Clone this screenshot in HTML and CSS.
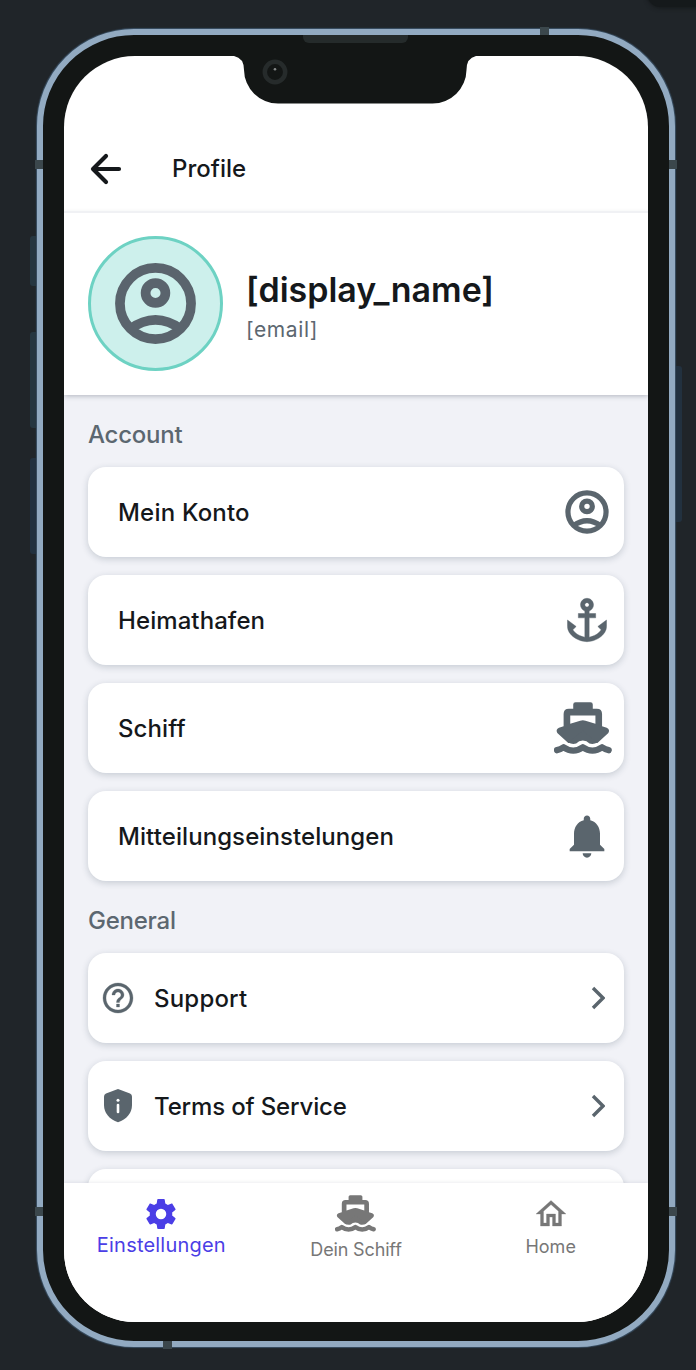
FILE: index.html
```html
<!DOCTYPE html>
<html lang="de">
<head>
<meta charset="utf-8">
<title>Profile</title>
<link rel="stylesheet" href="styles.css">
</head>
<body>
<svg class="defs" width="0" height="0" aria-hidden="true">
  <symbol id="account" viewBox="0 0 24 24">
    <g fill="none" stroke="currentColor" stroke-width="2.4"><circle cx="12" cy="12" r="8.8"/><circle cx="12" cy="9.400" r="2.450"/><path d="M5.600 18.400Q12 13.700 18.400 18.400"/></g>
  </symbol>
  <symbol id="ferry" viewBox="101 64 175 156">
    <path fill="currentColor" fill-rule="evenodd" d="M159 84V71q0-7 7-7h45q7 0 7 7v13h12q16 0 16 16v37l14 4q11 5 5 16L232 187q-14 2-26-6q-10-6-18-6t-18 6q-12 8-26 6L111 157q-6-11 5-16l14-4v-37q0-16 16-16zM150 104v25l30-9q8-3 16 0l30 9v-25z"/>
    <path fill="currentColor" d="M144 186q12 7 24 3q8-9 20-9t20 9q12 4 24-3L188 150z"/>
    <path fill="none" stroke="currentColor" stroke-width="19" stroke-linecap="round" stroke-linejoin="round" d="M110 209q10-2 20-9q14 10 29 10t29-10q14 10 29 10t29-10q10 7 20 9"/>
  </symbol>
</svg>
<div class="corner"></div>
<div class="phone">
  <i class="key key-mute"></i><i class="key key-up"></i><i class="key key-down"></i><i class="key key-power"></i>
  <i class="band band-top"></i><i class="band band-bottom"></i><i class="band band-lt"></i><i class="band band-rt"></i><i class="band band-lb"></i><i class="band band-rb"></i>
  <i class="speaker"></i>
  <div class="screen">
    <header class="bar">
      <svg class="back" viewBox="0 0 32 32"><path d="M16 3L3 16l13 13M3.500 16H29" fill="none" stroke="#15181b" stroke-width="4.2" stroke-linecap="round" stroke-linejoin="round"/></svg>
      <h1 class="title">Profile</h1>
    </header>
    <section class="profile">
      <div class="avatar"><svg width="97" height="97"><use href="#account"/></svg></div>
      <div class="who"><div class="name">[display_name]</div><div class="email">[email]</div></div>
    </section>
    <main class="list">
      <h2 class="label l-account">Account</h2>
      <div class="cards">
        <div class="card"><span class="t-konto">Mein Konto</span><svg width="52" height="52"><use href="#account"/></svg></div>
        <div class="card"><span class="t-hafen">Heimathafen</span><svg width="52" height="52" viewBox="0 0 24 24"><path fill="currentColor" stroke="currentColor" stroke-width=".2" d="M17 15l1.550 1.550c-.96 1.690-3.330 3.040-5.550 3.370V11h3V9h-3V7.820C14.160 7.400 15 6.300 15 5c0-1.650-1.350-3-3-3S9 3.350 9 5c0 1.300.84 2.400 2 2.820V9H8v2h3v8.920c-2.220-.33-4.590-1.680-5.550-3.370L7 15l-4-3v3c0 3.880 4.920 7 9 7s9-3.120 9-7v-3l-4 3zM12 4c.55 0 1 .45 1 1s-.45 1-1 1-1-.45-1-1 .45-1 1-1z"/></svg></div>
        <div class="card"><span class="t-schiff">Schiff</span><svg class="ship" width="58" height="52"><use href="#ferry"/></svg></div>
        <div class="card"><span class="t-mitt">Mitteilungseinstelungen</span><svg width="52" height="52" viewBox="0 0 24 24"><path fill="currentColor" d="M12 22c1.100 0 2-.9 2-2h-4c0 1.100.89 2 2 2zm6-6v-5c0-3.070-1.640-5.640-4.500-6.320V4c0-.83-.67-1.500-1.500-1.500s-1.500.67-1.500 1.500v.68C7.630 5.360 6 7.920 6 11v5l-2 2v1h16v-1l-2-2z"/></svg></div>
      </div>
      <h2 class="label l-general">General</h2>
      <div class="cards">
        <div class="card link"><svg width="36" height="36" viewBox="0 0 24 24"><path fill="currentColor" stroke="currentColor" stroke-width=".2" d="M11 18h2v-2h-2v2zm1-16C6.480 2 2 6.480 2 12s4.480 10 10 10 10-4.480 10-10S17.520 2 12 2zm0 18c-4.410 0-8-3.590-8-8s3.590-8 8-8 8 3.590 8 8-3.590 8-8 8zm0-14c-2.210 0-4 1.790-4 4h2c0-1.100.9-2 2-2s2 .9 2 2c0 2-3 1.750-3 5h2c0-2.250 3-2.500 3-5 0-2.210-1.790-4-4-4z"/></svg><span class="t-support">Support</span><svg class="chev" viewBox="0 0 14 24"><path d="M2 2l10 10L2 22" fill="none" stroke="currentColor" stroke-width="3.400"/></svg></div>
        <div class="card link"><svg width="36" height="36" viewBox="0 0 36 36"><path fill="currentColor" d="M18 1l12 4.500q2 .8 2 3V17c0 8-5.500 14.500-14 17.300C9.500 31.500 4 25 4 17V8.500q0-2.200 2-3z"/><circle cx="18" cy="12.300" r="1.500" fill="#fff"/><path d="M18 17v7" stroke="#fff" stroke-width="2.600" stroke-linecap="round"/></svg><span class="t-terms">Terms of Service</span><svg class="chev" viewBox="0 0 14 24"><path d="M2 2l10 10L2 22" fill="none" stroke="currentColor" stroke-width="3.400"/></svg></div>
        <div class="card"></div>
      </div>
    </main>
    <nav class="tabs">
      <div class="tab active"><svg width="36" height="36" viewBox="0 0 24 24"><path fill="currentColor" d="M12,15.500A3.500,3.500 0 0,1 8.500,12A3.500,3.500 0 0,1 12,8.500A3.500,3.500 0 0,1 15.500,12A3.500,3.500 0 0,1 12,15.500M19.430,12.970C19.470,12.650 19.500,12.330 19.500,12C19.500,11.670 19.470,11.340 19.430,11L21.540,9.370C21.730,9.220 21.780,8.950 21.660,8.730L19.660,5.270C19.540,5.050 19.270,4.960 19.050,5.050L16.560,6.050C16.040,5.660 15.500,5.320 14.870,5.070L14.500,2.420C14.460,2.180 14.250,2 14,2H10C9.750,2 9.540,2.180 9.500,2.420L9.130,5.070C8.500,5.320 7.960,5.660 7.440,6.050L4.950,5.050C4.730,4.960 4.460,5.050 4.340,5.270L2.340,8.730C2.210,8.950 2.270,9.220 2.460,9.370L4.570,11C4.530,11.340 4.500,11.670 4.500,12C4.500,12.330 4.530,12.650 4.570,12.970L2.460,14.630C2.270,14.780 2.210,15.050 2.340,15.270L4.340,18.730C4.460,18.950 4.730,19.030 4.950,18.950L7.440,17.940C7.960,18.340 8.500,18.680 9.130,18.930L9.500,21.580C9.540,21.820 9.750,22 10,22H14C14.250,22 14.460,21.820 14.500,21.580L14.870,18.930C15.500,18.670 16.040,18.340 16.560,17.940L19.050,18.950C19.270,19.030 19.540,18.950 19.660,18.730L21.660,15.270C21.780,15.050 21.730,14.780 21.540,14.630L19.430,12.970Z"/></svg><span class="n-set">Einstellungen</span></div>
      <div class="tab"><svg width="41" height="37"><use href="#ferry"/></svg><span class="n-ship">Dein Schiff</span></div>
      <div class="tab home"><svg width="36" height="36" viewBox="0 0 24 24"><path fill="currentColor" stroke="currentColor" stroke-width=".2" d="M12 5.690l5 4.500V18h-2v-6H9v6H7v-7.810l5-4.500M12 3L2 12h3v8h6v-6h2v6h6v-8h3L12 3z"/></svg><span class="n-home">Home</span></div>
    </nav>
    <svg class="notch" width="242" height="48" viewBox="0 0 242 48"><path fill="#131615" d="M0 0H242Q232.500 2 232.500 14A34 34 0 0 1 198.500 47.500H44A34 34 0 0 1 10 14Q10 2 0 0Z"/><circle cx="41" cy="16" r="10.200" fill="#131615" stroke="#262b2b" stroke-width="4.500"/><circle cx="41" cy="13.300" r="1.300" fill="#858989"/></svg>
  </div>
</div>
</body>
</html>
```
FILE: styles.css
```css
* { box-sizing: border-box; }
body { margin: 0; width: 696px; height: 1370px; overflow: hidden; position: relative; padding: 29px 21px 0 37px; background: #202529; font-family: Inter, "Liberation Sans", sans-serif; color: #15181b; }
.defs { position: absolute; }
.corner { position: absolute; top: -20px; right: -20px; width: 69px; height: 27px; border-radius: 14px; background: #15191b; box-shadow: 0 1px 4px #15191b; }
.phone { position: relative; width: 638px; height: 1318px; padding: 21px 21px 19px; border: 6px solid #92aac1; border-radius: 97px; background: #131615; box-shadow: 0 0 1px 1px #3a5064; }
.key { position: absolute; left: -13px; width: 6px; background: #263640; border-radius: 3px 0 0 3px; }
.key-mute { top: 201px; height: 50px; }
.key-up { top: 297px; height: 96px; }
.key-down { top: 423px; height: 96px; background: #22313f; }
.key-power { left: 633px; top: 331px; height: 156px; background: #22313f; border-radius: 0 3px 3px 0; }
.band { position: absolute; width: 8px; height: 9px; background: #3b474c; }
.band-top { left: 497px; top: -8px; width: 9px; height: 8px; }
.band-bottom { left: 120px; top: 1306px; width: 9px; height: 8px; }
.band-lt, .band-lb { left: -8px; }
.band-rt, .band-rb { left: 626px; }
.band-lt, .band-rt { top: 124.500px; }
.band-lb, .band-rb { top: 1172px; }
.speaker { position: absolute; left: 259.500px; top: 0; width: 105px; height: 8px; border-radius: 0 0 6px 6px; background: #252b2b; }
.screen { position: relative; width: 584px; height: 1266px; display: flex; flex-direction: column; overflow: hidden; border-radius: 71px; background: #fff; }
.notch { position: absolute; left: 170px; top: 0; }
.bar { position: relative; z-index: 2; height: 157px; padding: 70px 26px 0 26px; display: flex; align-items: center; gap: 50px; border-bottom: 2px solid #f0f1f4; }
.notch { z-index: 3; }
.back { width: 32px; height: 32px; }
.title { margin: 0; font-size: 24px; font-weight: 500; line-height: 30px; }
.profile { position: relative; z-index: 1; height: 182px; padding: 0 24px 1px; display: flex; align-items: center; gap: 23px; background: #fff; box-shadow: 0 1px 5px rgba(30,40,60,.3); }
.avatar { width: 135px; height: 135px; display: grid; place-items: center; border: 3px solid #6dd2c3; border-radius: 50%; background: #cdf0ec; color: #5a646d; }
.who { padding-top: 3px; }
.name { font-size: 34px; font-weight: 600; line-height: 44px; }
.email { font-size: 21px; line-height: 27px; margin-top: 4px; color: #5c6770; letter-spacing: .6px; }
.list { flex: 1; min-height: 0; overflow: hidden; padding: 0 24px; background: #f1f2f7; }
.label { margin: 0; height: 72px; padding-top: 25px; font-size: 24px; line-height: 30px; font-weight: 500; color: #5c6770; letter-spacing: -.25px; }
.cards { display: flex; flex-direction: column; gap: 18px; }
.card { height: 90px; flex: none; padding: 0 11px 0 30px; display: flex; align-items: center; justify-content: space-between; border-radius: 18px; background: #fff; font-size: 24px; font-weight: 500; letter-spacing: .08px; box-shadow: 0 2px 7px rgba(30,50,70,.2); }
.card svg { color: #5a656d; }
.card .ship { margin: -1px 1px 0 0; }
.link { justify-content: flex-start; padding: 0 19px 0 12px; }
.link span { margin-left: 18px; flex: 1; }
.t-konto { letter-spacing: .2px; }
.t-support { letter-spacing: .2px; }
.t-terms { letter-spacing: -.15px; }
.chev { width: 14px; height: 24px; }
.tabs { position: relative; height: 139.500px; display: grid; grid-template-columns: repeat(3, 1fr); background: #fff; box-shadow: 0 -1px 3px rgba(30,40,60,.08); }
.tab { display: flex; flex-direction: column; align-items: center; padding-top: 12px; font-size: 18px; line-height: 24px; color: #777; }
.tab.active { color: #4b3ee6; padding-top: 13px; font-size: 20px; letter-spacing: .2px; }
.tab.home { padding-top: 13px; }
.tab span { white-space: nowrap; }
.n-set { margin-top: 1px; }
.n-home { margin-top: 3px; }
.n-ship { margin-top: 6px; letter-spacing: -.15px; }
```
